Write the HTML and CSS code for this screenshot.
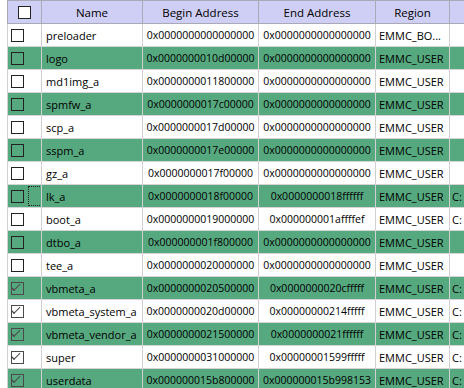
FILE: index.html
```html
<!DOCTYPE html>
<html lang="en">
<head>
  <meta charset="utf-8">
  <title>Partition list</title>
  <link rel="stylesheet" href="styles.css">
</head>
<body>
  <div class="grid">
    <div class="row row-head">
      <div class="cell cell-check"><span class="box box-head"></span></div>
      <div class="cell cell-head">Name</div>
      <div class="cell cell-head">Begin Address</div>
      <div class="cell cell-head">End Address</div>
      <div class="cell cell-head">Region</div>
      <div class="cell cell-head"></div>
    </div>

    <div class="row">
      <div class="cell cell-check"><span class="box"></span></div>
      <div class="cell cell-name">preloader</div>
      <div class="cell cell-addr">0x0000000000000000</div>
      <div class="cell cell-addr">0x0000000000000000</div>
      <div class="cell cell-region">EMMC_BO...</div>
      <div class="cell cell-loc"></div>
    </div>
    <div class="row row-green">
      <div class="cell cell-check"><span class="box"></span></div>
      <div class="cell cell-name">logo</div>
      <div class="cell cell-addr">0x0000000010d00000</div>
      <div class="cell cell-addr">0x0000000000000000</div>
      <div class="cell cell-region">EMMC_USER</div>
      <div class="cell cell-loc"></div>
    </div>
    <div class="row">
      <div class="cell cell-check"><span class="box"></span></div>
      <div class="cell cell-name">md1img_a</div>
      <div class="cell cell-addr">0x0000000011800000</div>
      <div class="cell cell-addr">0x0000000000000000</div>
      <div class="cell cell-region">EMMC_USER</div>
      <div class="cell cell-loc"></div>
    </div>
    <div class="row row-green">
      <div class="cell cell-check"><span class="box"></span></div>
      <div class="cell cell-name">spmfw_a</div>
      <div class="cell cell-addr">0x0000000017c00000</div>
      <div class="cell cell-addr">0x0000000000000000</div>
      <div class="cell cell-region">EMMC_USER</div>
      <div class="cell cell-loc"></div>
    </div>
    <div class="row">
      <div class="cell cell-check"><span class="box"></span></div>
      <div class="cell cell-name">scp_a</div>
      <div class="cell cell-addr">0x0000000017d00000</div>
      <div class="cell cell-addr">0x0000000000000000</div>
      <div class="cell cell-region">EMMC_USER</div>
      <div class="cell cell-loc"></div>
    </div>
    <div class="row row-green">
      <div class="cell cell-check"><span class="box"></span></div>
      <div class="cell cell-name">sspm_a</div>
      <div class="cell cell-addr">0x0000000017e00000</div>
      <div class="cell cell-addr">0x0000000000000000</div>
      <div class="cell cell-region">EMMC_USER</div>
      <div class="cell cell-loc"></div>
    </div>
    <div class="row">
      <div class="cell cell-check"><span class="box"></span></div>
      <div class="cell cell-name">gz_a</div>
      <div class="cell cell-addr">0x0000000017f00000</div>
      <div class="cell cell-addr">0x0000000000000000</div>
      <div class="cell cell-region">EMMC_USER</div>
      <div class="cell cell-loc"></div>
    </div>
    <div class="row row-green">
      <div class="cell cell-check"><span class="box"></span><span class="focus"></span></div>
      <div class="cell cell-name">lk_a</div>
      <div class="cell cell-addr">0x0000000018f00000</div>
      <div class="cell cell-addr">0x0000000018ffffff</div>
      <div class="cell cell-region">EMMC_USER</div>
      <div class="cell cell-loc">C:</div>
    </div>
    <div class="row">
      <div class="cell cell-check"><span class="box"></span></div>
      <div class="cell cell-name">boot_a</div>
      <div class="cell cell-addr">0x0000000019000000</div>
      <div class="cell cell-addr">0x000000001affffef</div>
      <div class="cell cell-region">EMMC_USER</div>
      <div class="cell cell-loc">C:</div>
    </div>
    <div class="row row-green">
      <div class="cell cell-check"><span class="box"></span></div>
      <div class="cell cell-name">dtbo_a</div>
      <div class="cell cell-addr">0x000000001f800000</div>
      <div class="cell cell-addr">0x0000000000000000</div>
      <div class="cell cell-region">EMMC_USER</div>
      <div class="cell cell-loc"></div>
    </div>
    <div class="row">
      <div class="cell cell-check"><span class="box"></span></div>
      <div class="cell cell-name">tee_a</div>
      <div class="cell cell-addr">0x0000000020000000</div>
      <div class="cell cell-addr">0x0000000000000000</div>
      <div class="cell cell-region">EMMC_USER</div>
      <div class="cell cell-loc"></div>
    </div>
    <div class="row row-green">
      <div class="cell cell-check"><span class="box box-checked"></span></div>
      <div class="cell cell-name">vbmeta_a</div>
      <div class="cell cell-addr">0x0000000020500000</div>
      <div class="cell cell-addr">0x0000000020cfffff</div>
      <div class="cell cell-region">EMMC_USER</div>
      <div class="cell cell-loc">C:</div>
    </div>
    <div class="row">
      <div class="cell cell-check"><span class="box box-checked"></span></div>
      <div class="cell cell-name">vbmeta_system_a</div>
      <div class="cell cell-addr">0x0000000020d00000</div>
      <div class="cell cell-addr">0x00000000214fffff</div>
      <div class="cell cell-region">EMMC_USER</div>
      <div class="cell cell-loc">C:</div>
    </div>
    <div class="row row-green">
      <div class="cell cell-check"><span class="box box-checked"></span></div>
      <div class="cell cell-name">vbmeta_vendor_a</div>
      <div class="cell cell-addr">0x0000000021500000</div>
      <div class="cell cell-addr">0x0000000021ffffff</div>
      <div class="cell cell-region">EMMC_USER</div>
      <div class="cell cell-loc">C:</div>
    </div>
    <div class="row">
      <div class="cell cell-check"><span class="box box-checked"></span></div>
      <div class="cell cell-name">super</div>
      <div class="cell cell-addr">0x0000000031000000</div>
      <div class="cell cell-addr">0x00000001599fffff</div>
      <div class="cell cell-region">EMMC_USER</div>
      <div class="cell cell-loc">C:</div>
    </div>
    <div class="row row-green">
      <div class="cell cell-check"><span class="box box-checked"></span></div>
      <div class="cell cell-name">userdata</div>
      <div class="cell cell-addr">0x000000015b800000</div>
      <div class="cell cell-addr">0x000000015b998153</div>
      <div class="cell cell-region">EMMC_USER</div>
      <div class="cell cell-loc">C:</div>
    </div>
  </div>
</body>
</html>
```
FILE: styles.css
```css
html, body {
  margin: 0;
  padding: 0;
  overflow: hidden;
  background-color: #ffffff;
}

body {
  padding-left: 7px;
  color: #000000;
  font-family: "Open Sans", "Noto Sans", sans-serif;
  font-size: 11px;
}

.grid {
  width: 480px;
}

.row {
  display: grid;
  grid-template-columns: 34px 101px 116px 117px 74px 1fr;
  height: 23px;
  border-bottom: 1px solid #d6d6d6;
  box-sizing: border-box;
}

.row-green {
  background-color: #56a97f;
}

.row-head {
  height: 24px;
  border-top: 1px solid #a9a9b8;
  border-bottom: 1px solid #a9a9b8;
  background-color: #cfcff5;
}

.cell {
  display: flex;
  align-items: center;
  border-left: 1px solid #d0d0d0;
  min-width: 0;
  overflow: hidden;
  white-space: nowrap;
}

.row-head .cell {
  border-left-color: #a9a9b8;
}

.cell-head {
  justify-content: center;
  font-size: 11.5px;
}

.cell-check {
  position: relative;
  padding-left: 3px;
}

.row-head .cell-check {
  justify-content: center;
  padding-left: 0;
}

.cell-name {
  padding-left: 4px;
}

.cell-addr {
  justify-content: center;
  font-size: 10.5px;
}

.cell-region {
  padding: 0 3px;
}

.cell-loc {
  padding-left: 2px;
}

.box {
  display: block;
  width: 13px;
  height: 13px;
  box-sizing: border-box;
  border: 1px solid #222222;
  background-color: #ffffff;
}

.row-green .box {
  background-color: transparent;
}

.box-checked {
  position: relative;
  border-color: #4a4a4a;
}

.box-checked::after {
  content: "";
  position: absolute;
  left: 3px;
  top: 1px;
  width: 6px;
  height: 3px;
  border-left: 1px solid #4a4a4a;
  border-bottom: 1px solid #4a4a4a;
  transform: translate(-1px, 3px) rotate(-45deg) scaleX(1.3);
  transform-origin: left bottom;
}

.focus {
  position: absolute;
  left: 20px;
  top: 1px;
  width: 14px;
  height: 20px;
  box-sizing: border-box;
  border: 1px dotted #222222;
}
```
